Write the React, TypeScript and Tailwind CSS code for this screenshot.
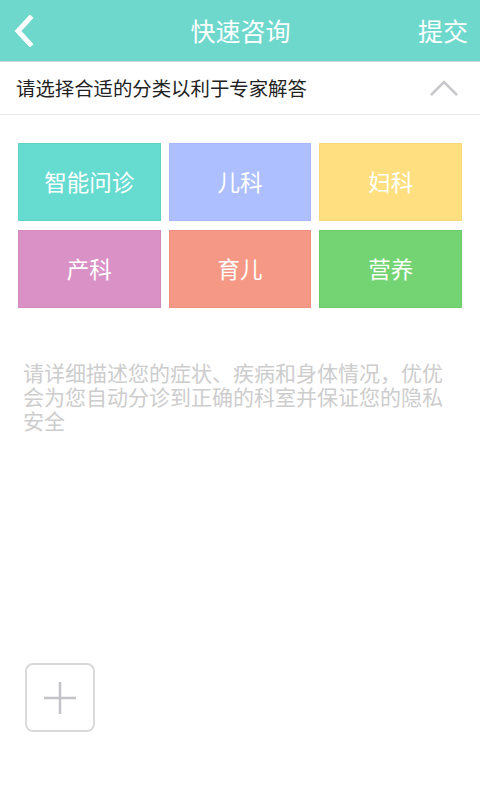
import React from "react";

const font = { fontFamily: '"Noto Sans CJK SC", "Noto Sans", sans-serif' };

const tiles = [
  { label: "智能问诊", cls: "bg-[#66dbd0] border-[#5fd3c8]" },
  { label: "儿科", cls: "bg-[#adbffe] border-[#a5b7f6]" },
  { label: "妇科", cls: "bg-[#ffdf80] border-[#f7d77a]" },
  { label: "产科", cls: "bg-[#da92c6] border-[#d28abe]" },
  { label: "育儿", cls: "bg-[#f59885] border-[#ed907d]" },
  { label: "营养", cls: "bg-[#74d473] border-[#6ccc6b]" },
];

const lines = [
  "请详细描述您的症状、疾病和身体情况，优优",
  "会为您自动分诊到正确的科室并保证您的隐私",
  "安全",
];

export default function App() {
  return (
    <div className="w-[480px] h-[800px] bg-white flex flex-col" style={font}>
      <div className="h-[62px] bg-[#6dd8cb] flex items-center justify-between px-[12px] border-b border-[#c9d6d4]">
        <svg width="22" height="32" viewBox="0 0 22 32" className="ml-[1px]">
          <path d="M17 3 L5 16 L17 29" fill="none" stroke="white" strokeWidth="5" strokeLinecap="square" />
        </svg>
        <span className="text-white text-[25px] leading-none pl-[28px]">快速咨询</span>
        <span className="text-white text-[25px] leading-none">提交</span>
      </div>
      <div className="h-[53px] flex items-center justify-between pl-[16px] pr-[22px] border-b border-[#e8e8e8]">
        <span className="text-[19.4px] text-[#222]">请选择合适的分类以利于专家解答</span>
        <svg width="28" height="16" viewBox="0 0 28 16">
          <path d="M1 15 L14 2 L27 15" fill="none" stroke="#c7c7cc" strokeWidth="2.5" />
        </svg>
      </div>
      <div className="grid grid-cols-3 gap-x-[8px] gap-y-[9px] px-[18px] pt-[28px]">
        {tiles.map((t) => (
          <div key={t.label} className={`h-[78px] flex items-center justify-center border ${t.cls}`}>
            <span className="text-white text-[22.5px]">{t.label}</span>
          </div>
        ))}
      </div>
      <div className="px-[23px] pt-[52px] text-[21px] leading-[24px] text-[#cdcdcd] flex flex-col">
        {lines.map((l) => (
          <div key={l} className="h-[24px] whitespace-nowrap">{l}</div>
        ))}
      </div>
      <div className="flex-1" />
      <div className="px-[25px] pb-[68px]">
        <div className="w-[70px] h-[69px] rounded-[8px] border-2 border-[#dadadd] flex items-center justify-center">
          <svg width="32" height="32" viewBox="0 0 32 32">
            <path d="M16 0 V32 M0 16 H32" stroke="#c4c4c8" strokeWidth="2.5" />
          </svg>
        </div>
      </div>
    </div>
  );
}
